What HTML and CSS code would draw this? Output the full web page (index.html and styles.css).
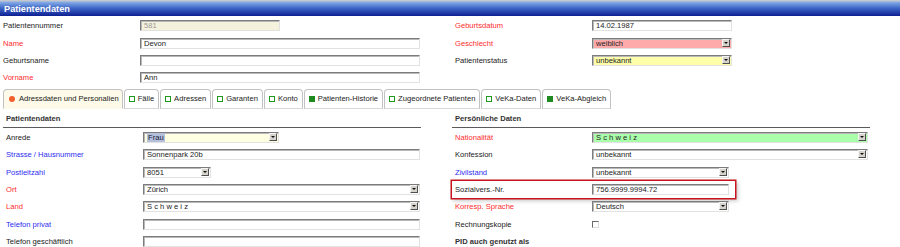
FILE: index.html
```html
<!DOCTYPE html>
<html lang="de">
<head>
  <meta charset="UTF-8">
  <title>Patientendaten</title>
  <link rel="stylesheet" href="styles.css">
</head>
<body>
  <div class="titlebar">Patientendaten</div>

  <div class="head-form">
    <div class="col col-left">
      <div class="row"><span class="label">Patientennummer</span><span class="field readonly w-140">581</span></div>
      <div class="row"><span class="label req">Name</span><span class="field w-280">Devon</span></div>
      <div class="row"><span class="label">Geburtsname</span><span class="field w-280"></span></div>
      <div class="row"><span class="label req">Vorname</span><span class="field w-280">Ann</span></div>
    </div>
    <div class="col col-right">
      <div class="row"><span class="label req">Geburtsdatum</span><span class="field w-140">14.02.1987</span></div>
      <div class="row"><span class="label req">Geschlecht</span><span class="field select pink w-140">weiblich<i class="arrow"></i></span></div>
      <div class="row"><span class="label">Patientenstatus</span><span class="field select yellow w-140">unbekannt<i class="arrow"></i></span></div>
    </div>
  </div>

  <div class="tabs">
    <div class="tab active"><i class="dot"></i>Adressdaten und Personalien</div>
    <div class="tab"><i class="sq"></i>Fälle</div>
    <div class="tab"><i class="sq"></i>Adressen</div>
    <div class="tab"><i class="sq"></i>Garanten</div>
    <div class="tab"><i class="sq"></i>Konto</div>
    <div class="tab"><i class="sq full"></i>Patienten-Historie</div>
    <div class="tab"><i class="sq"></i>Zugeordnete Patienten</div>
    <div class="tab"><i class="sq"></i>VeKa-Daten</div>
    <div class="tab"><i class="sq full"></i>VeKa-Abgleich</div>
  </div>

  <div class="sections">
    <div class="section">
      <div class="section-title">Patientendaten</div>
      <div class="rows">
        <div class="row"><span class="label">Anrede</span><span class="field select cream w-136"><em class="sel">Frau</em><i class="arrow"></i></span></div>
        <div class="row"><span class="label opt">Strasse / Hausnummer</span><span class="field w-277">Sonnenpark 20b</span></div>
        <div class="row"><span class="label opt">Postleitzahl</span><span class="field select w-68">8051<i class="arrow"></i></span></div>
        <div class="row"><span class="label req">Ort</span><span class="field select w-277">Zürich<i class="arrow"></i></span></div>
        <div class="row"><span class="label req">Land</span><span class="field select w-277">S c h w e i z<i class="arrow"></i></span></div>
        <div class="row"><span class="label opt">Telefon privat</span><span class="field w-277"></span></div>
        <div class="row"><span class="label">Telefon geschäftlich</span><span class="field w-277"></span></div>
      </div>
    </div>
    <div class="section">
      <div class="section-title">Persönliche Daten</div>
      <div class="rows">
        <div class="row"><span class="label req">Nationalität</span><span class="field select green w-276">S c h w e i z<i class="arrow"></i></span></div>
        <div class="row"><span class="label">Konfession</span><span class="field select w-276">unbekannt<i class="arrow"></i></span></div>
        <div class="row"><span class="label opt">Zivilstand</span><span class="field select w-137">unbekannt<i class="arrow"></i></span></div>
        <div class="row marked"><span class="label">Sozialvers.-Nr.</span><span class="field w-137">756.9999.9994.72</span></div>
        <div class="row"><span class="label req">Korresp. Sprache</span><span class="field select w-137">Deutsch<i class="arrow"></i></span></div>
        <div class="row"><span class="label">Rechnungskopie</span><span class="check"></span></div>
        <div class="row"><span class="label strong">PID auch genutzt als</span></div>
      </div>
    </div>
  </div>
</body>
</html>
```

FILE: styles.css
```css
body {
  margin: 0;
  font-family: "Liberation Sans", Arial, sans-serif;
  font-size: 7.6px;
  color: #222;
  background: #fff;
}

.titlebar {
  height: 16px;
  padding-left: 4px;
  background: linear-gradient(#c4c8ce 0, #c4c8ce 1px, #86ace6 2px, #3f68c8 8px, #0e1f92 16px);
  color: #fff;
  font-size: 9.2px;
  font-weight: bold;
  line-height: 18px;
}

/* kopf-formular */
.head-form {
  display: flex;
  gap: 35px;
  padding: 1px 0 0 3px;
}

.col-left { width: 417px; }

.row {
  display: flex;
  align-items: center;
  height: 17.4px;
}

.label {
  width: 137px;
  flex: none;
  white-space: nowrap;
}

.label.req { color: #ff2b2b; }
.label.opt { color: #2c2cf2; }
.label.strong { font-weight: bold; color: #333; }

.field {
  position: relative;
  box-sizing: border-box;
  height: 11px;
  padding-left: 3px;
  border: 1px solid;
  border-color: #7c7c7c #e2e2e2 #e2e2e2 #7c7c7c;
  box-shadow: inset 1px 1px 0 #b8b8b8;
  background: #fff;
  line-height: 9px;
  white-space: nowrap;
}

.field.readonly { background: #f4f2dc; color: #9a9a9a; }
.field.pink { background: #ffaaaa; }
.field.yellow { background: #ffffaa; }
.field.cream { background: #ffffe2; }
.field.green { background: #aaffaa; }

.sel {
  font-style: normal;
  background: #b4c0da;
  color: #1a1a3a;
  padding: 0 1px;
}

.arrow {
  position: absolute;
  right: 1px;
  top: 0;
  width: 8px;
  height: 8px;
  box-sizing: border-box;
  background: #d6d3cc;
  border: 1px solid;
  border-color: #f4f4f4 #505050 #505050 #f4f4f4;
}

.arrow::after {
  content: "";
  position: absolute;
  left: 1px;
  top: 2px;
  border-left: 2px solid transparent;
  border-right: 2px solid transparent;
  border-top: 2px solid #111;
}

.w-68 { width: 68px; }
.w-136 { width: 136px; }
.w-137 { width: 137px; }
.w-140 { width: 140px; }
.w-276 { width: 276px; }
.w-277 { width: 277px; }
.w-280 { width: 280px; }

.check {
  width: 7px;
  height: 7px;
  box-sizing: border-box;
  border: 1px solid;
  border-color: #6a6a6a #dcdcdc #dcdcdc #6a6a6a;
  background: #fff;
}

/* reiter */
.tabs {
  display: flex;
  gap: 1px;
  margin: 2px 0 0 3px;
  height: 20px;
}

.tab {
  display: flex;
  align-items: center;
  gap: 3px;
  padding: 0 4px;
  border: 1px solid #c2c2c2;
  border-bottom-color: #d8d8d8;
  border-radius: 4px 4px 0 0;
  background: #fff;
  white-space: nowrap;
}

.tab.active {
  background: #fdfae9;
  border-bottom-color: #fdfae9;
  padding: 0 3px 0 5px;
}

.dot {
  width: 6px;
  height: 6px;
  border-radius: 50%;
  background: #f2602c;
  margin-right: 1px;
}

.sq {
  width: 6px;
  height: 6px;
  box-sizing: border-box;
  border: 1.5px solid #1f9a1f;
}

.sq.full { background: #1f8a1f; border-color: #1f8a1f; }

/* abschnitte */
.sections {
  display: flex;
  gap: 31px;
  padding-left: 3px;
}

.section { width: 418px; }

.section-title {
  margin-top: 5px;
  padding: 0 3px 3px;
  line-height: 10px;
  font-weight: bold;
  color: #333;
  border-bottom: 1px solid #5a5a5a;
}

.rows { padding-top: 1px; }

.rows .label {
  width: 137px;
  padding-left: 3px;
}

.row.marked {
  width: 283px;
  box-shadow: 0 0 0 1.5px #c8141e, 2px 2px 4px 1px rgba(0, 0, 0, 0.22);
}
```
